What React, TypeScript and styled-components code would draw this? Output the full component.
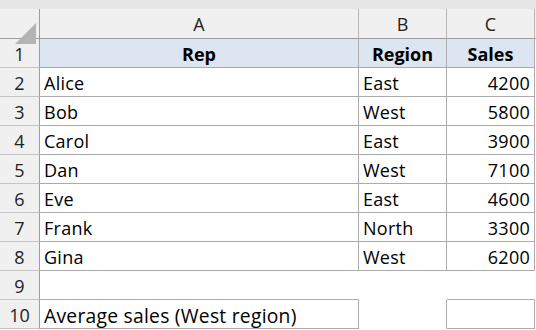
import React from "react";
import styled, { createGlobalStyle } from "styled-components";

const Global = createGlobalStyle`
  html, body { margin: 0; padding: 0; background: #ffffff; }
  body { font-family: "Open Sans", "Liberation Sans", sans-serif; }
`;

const Band = styled.div`
  height: 9px;
  background: #e6e6e6;
`;

const Sheet = styled.div`
  display: grid;
  grid-template-columns: 40px 319px 88px 88px 1fr;
  grid-template-rows: 30px repeat(10, 29px);
  font-family: "Open Sans", "Liberation Sans", sans-serif;
  font-size: 18px;
  line-height: 1;
  color: #000;
`;

const Corner = styled.div`
  box-sizing: border-box;
  background: #f0f0f0;
  border-right: 1px solid #9e9e9e;
  border-bottom: 1px solid #9e9e9e;
  position: relative;
`;

const Triangle = styled.svg`
  position: absolute;
  left: 15px;
  top: 14px;
`;

const ColHead = styled.div`
  box-sizing: border-box;
  background: #f0f0f0;
  border-right: 1px solid #b8b8b8;
  border-bottom: 1px solid #9e9e9e;
  display: flex;
  align-items: center;
  justify-content: center;
  color: #222;
  padding-top: 1px;
`;

const RowHead = styled.div`
  box-sizing: border-box;
  background: #f0f0f0;
  border-right: 1px solid #9e9e9e;
  border-bottom: 1px solid #c4c4c4;
  display: flex;
  align-items: center;
  justify-content: center;
  color: #222;
  padding-top: 2px;
`;

const Cell = styled.div<{ $r?: boolean; $b?: boolean; $head?: boolean; $big?: boolean; $align?: string }>`
  box-sizing: border-box;
  background: ${(p) => (p.$head ? "#dde6f0" : "#ffffff")};
  border-right: 1px solid ${(p) => (p.$r ? "#ababab" : "transparent")};
  border-bottom: 1px solid ${(p) => (p.$b ? "#ababab" : "transparent")};
  display: flex;
  align-items: center;
  justify-content: ${(p) => p.$align || "flex-start"};
  padding: ${(p) => (p.$big ? "4px" : "2px")} 4px 0 4px;
  font-weight: ${(p) => (p.$head ? 700 : 400)};
  font-size: ${(p) => (p.$big ? "19.3px" : "18px")};
  letter-spacing: ${(p) => (p.$head ? "0" : "0.25px")};
  white-space: nowrap;
  overflow: hidden;
`;

const Filler = styled.div<{ $head?: boolean }>`
  background: ${(p) => (p.$head ? "#f0f0f0" : "#ffffff")};
  ${(p) => (p.$head ? "border-bottom: 1px solid #9e9e9e;" : "")}
`;

const data: [string, string, number][] = [
  ["Alice", "East", 4200],
  ["Bob", "West", 5800],
  ["Carol", "East", 3900],
  ["Dan", "West", 7100],
  ["Eve", "East", 4600],
  ["Frank", "North", 3300],
  ["Gina", "West", 6200],
];

export default function App() {
  return (
    <>
      <Global />
      <Band />
      <Sheet>
        <Corner>
          <Triangle width="21" height="21" viewBox="0 0 21 21">
            <polygon points="21,0 21,21 0,21" fill="#b4b4b4" />
          </Triangle>
        </Corner>
        <ColHead>A</ColHead>
        <ColHead>B</ColHead>
        <ColHead>C</ColHead>
        <Filler $head />

        <RowHead>1</RowHead>
        <Cell $head $r $b $align="center">Rep</Cell>
        <Cell $head $r $b $align="center">Region</Cell>
        <Cell $head $r $b $align="center">Sales</Cell>
        <Filler />

        {data.map(([rep, region, sales], i) => (
          <React.Fragment key={rep}>
            <RowHead>{i + 2}</RowHead>
            <Cell $r $b>{rep}</Cell>
            <Cell $r $b>{region}</Cell>
            <Cell $r $b $align="flex-end">{sales}</Cell>
            <Filler />
          </React.Fragment>
        ))}

        <RowHead>9</RowHead>
        <Cell $b />
        <Cell />
        <Cell $b />
        <Filler />

        <RowHead>10</RowHead>
        <Cell $r $b $big>Average sales (West region)</Cell>
        <Cell $r />
        <Cell $r $b />
        <Filler />
      </Sheet>
    </>
  );
}
